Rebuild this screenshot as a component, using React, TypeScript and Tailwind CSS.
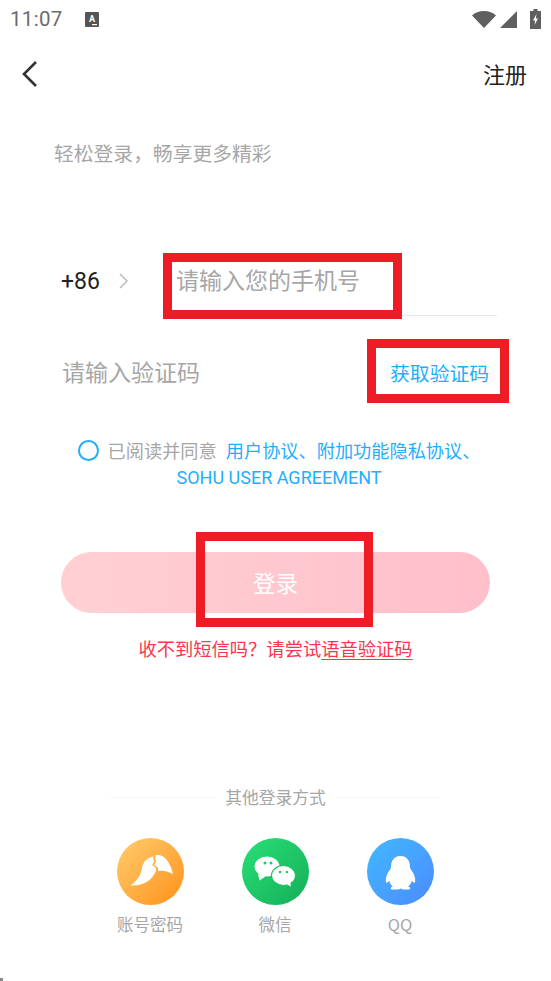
const cjk = "font-['Noto_Sans_CJK_SC','Noto_Sans',sans-serif]";

function StatusBar() {
  return (
    <div className="flex h-[38px] items-center justify-between pl-[10px] pr-[10px] text-[#6b6b6b]">
      <div className="flex items-center gap-[22px]">
        <span className="font-['Roboto',sans-serif] text-[20.5px] leading-none tracking-[0.3px]">11:07</span>
        <svg width="14" height="15" viewBox="0 0 14 15">
          <rect width="14" height="15" rx="1" fill="#555" />
          <text x="7" y="9.500" textAnchor="middle" fontSize="9" fontWeight="700" fill="#fff" fontFamily="Roboto, sans-serif">A</text>
          <rect x="7" y="12" width="5" height="1.200" fill="#fff" />
        </svg>
      </div>
      <div className="flex items-center gap-[4px]">
        <svg width="24" height="18" viewBox="0 0 24 18">
          <path d="M0 5.500C3 2.500 7 1 12 1S21 2.500 24 5.500L12 18Z" fill="#5f5f5f" />
        </svg>
        <svg width="17" height="18" viewBox="0 0 17 18">
          <path d="M17 1V18H0Z" fill="#5f5f5f" />
        </svg>
        <svg className="ml-[9px]" width="11" height="20" viewBox="0 0 11 20">
          <path d="M3.500 0h4v2H11v18H0V2h3.500Z" fill="#5f5f5f" />
          <path d="M6.500 5 3 11.500h2.200L4.500 16 8 9.500H5.800Z" fill="#fff" />
        </svg>
      </div>
    </div>
  );
}

function Red({ className }: { className: string }) {
  return <div className={`absolute border-[9px] border-[#ee1c25] ${className}`} />;
}

function LoginIcon({ className, label, children }: { className: string; label: string; children: React.ReactNode }) {
  return (
    <div className="flex w-[67px] flex-col items-center">
      <div className={`size-[67px] rounded-full ${className}`}>{children}</div>
      <span className="mt-[7px] whitespace-nowrap text-[16.500px] leading-[24px] text-[#a6a6a6]">{label}</span>
    </div>
  );
}

export default function App() {
  return (
    <div className={`relative h-[981px] w-[551px] overflow-hidden bg-white ${cjk}`}>
      <StatusBar />

      <div className="flex h-[72px] items-center justify-between pl-[20px] pr-[24px]">
        <svg width="20" height="28" viewBox="0 0 20 28" fill="none" stroke="#333" strokeWidth="2.600">
          <path d="M16 2 4 14l12 12" />
        </svg>
        <span className="mb-[2px] text-[22px] leading-none text-[#222]">注册</span>
      </div>

      <p className="mt-[29px] pl-[54px] text-[19.800px] leading-[28px] text-[#a6a6a6]">轻松登录，畅享更多精彩</p>

      <div className="ml-[61px] mr-[54px] mt-[83px] flex h-[66px] items-center">
        <span className="mb-[4px] font-['Roboto',sans-serif] text-[23px] leading-none text-[#222]">+86</span>
        <svg className="mb-[4px] ml-[18px]" width="11" height="18" viewBox="0 0 11 18" fill="none" stroke="#bbb" strokeWidth="1.500">
          <path d="m2 2 7 7-7 7" />
        </svg>
        <div className="ml-[47px] flex h-[66px] flex-1 items-center border-b border-[#e8e8e8] pb-[6px]">
          <span className="text-[23px] leading-none text-[#a6a6a6]">请输入您的手机号</span>
        </div>
      </div>

      <div className="mx-[62px] mt-[27px] flex h-[60px] items-center justify-between">
        <span className="mb-[3px] text-[23px] leading-none text-[#a6a6a6]">请输入验证码</span>
        <span className="text-[19.800px] leading-none text-[#1eaefc]">获取验证码</span>
      </div>

      <div className="mt-[34px] flex flex-col items-center text-[#1eaefc]">
        <div className="flex h-[26px] items-center pl-[7px] text-[18.200px] leading-none">
          <span className="mr-[9px] size-[21px] rounded-full border-2 border-[#1eaefc]" />
          <span className="text-[#a6a6a6]">已阅读并同意</span>
          <span className="ml-[9px]">用户协议、附加功能隐私协议、</span>
        </div>
        <span className="mt-[2px] pl-[7px] font-['Roboto',sans-serif] text-[18px] leading-[26px]">SOHU USER AGREEMENT</span>
      </div>

      <button className="mx-[61px] mt-[61px] flex h-[61px] w-[429px] items-center justify-center rounded-full bg-gradient-to-r from-[#ffd0d3] to-[#ffbfcb] text-[22.500px] text-white">
        登录
      </button>

      <p className="mt-[21px] text-center text-[18.300px] leading-[28px] text-[#f9364f]">
        收不到短信吗？请尝试<span className="underline underline-offset-[3px]">语音验证码</span>
      </p>

      <div className="mx-[110px] mt-[123px] flex items-center gap-[8px]">
        <div className="h-px flex-1 bg-[#f7f7f7]" />
        <span className="text-[16.800px] leading-[24px] text-[#a6a6a6]">其他登录方式</span>
        <div className="h-px flex-1 bg-[#f7f7f7]" />
      </div>

      <div className="mt-[29px] flex justify-center gap-[58px] pr-[1px]">
        <LoginIcon className="bg-gradient-to-br from-[#ffcc6b] to-[#ff9100]" label="账号密码">
          <svg width="67" height="67" viewBox="0 0 67 67" fill="#fff">
            <path d="M13.500 47.500C20 43 24 37 25 30C26 24 30 20 36 18.500L37 24L35 27L39 30L39 33C35 42 27 48 13.500 47.500Z" />
            <path d="M38 17.500C46 15 53 23 56 36C50 33 46 32 41 33L41 29.500L37 27L39 24Z" />
          </svg>
        </LoginIcon>
        <LoginIcon className="bg-gradient-to-br from-[#29e076] to-[#14ae58]" label="微信">
          <svg width="67" height="67" viewBox="0 0 67 67">
            <ellipse cx="25" cy="28.500" rx="12.500" ry="10" fill="#fff" />
            <path d="m16 36 1.500 6.500 6-4Z" fill="#fff" />
            <ellipse cx="41.500" cy="37.500" rx="12" ry="10" fill="#fff" stroke="#1cc264" strokeWidth="1.200" />
            <path d="m44 46 5 2.500-1-6Z" fill="#fff" />
            <circle cx="23" cy="25" r="1.500" fill="#1fc968" />
            <circle cx="29" cy="25" r="1.500" fill="#1fc968" />
            <circle cx="38" cy="34" r="1.300" fill="#1fc968" />
            <circle cx="45" cy="34" r="1.300" fill="#1fc968" />
          </svg>
        </LoginIcon>
        <LoginIcon className="bg-gradient-to-br from-[#41b9ff] to-[#4b8aff]" label="QQ">
          <svg width="67" height="67" viewBox="0 0 67 67" fill="#fff">
            <path d="M33.500 18C26 18 24 24 24 29C24 32 21 33 19.500 38C18.500 42 18.500 44 19.500 45L22.500 43C23 46 24 47 26 48.500C23.500 49 23 51 25 51.500L31.500 51.500L33.500 50.500L35.500 51.500L42 51.500C44 51 43.500 49 41 48.500C43 47 44 46 44.500 43L47.500 45C48.500 44 48.500 42 47.500 38C46 33 43 32 43 29C43 24 41 18 33.500 18Z" />
          </svg>
        </LoginIcon>
      </div>

      <Red className="left-[163px] top-[253px] h-[66px] w-[239px]" />
      <Red className="left-[367px] top-[339px] h-[64px] w-[142px]" />
      <Red className="left-[196px] top-[532px] h-[95px] w-[177px]" />
      <div className="absolute bottom-0 left-0 h-[3px] w-[3px] bg-[#888]" />
    </div>
  );
}
